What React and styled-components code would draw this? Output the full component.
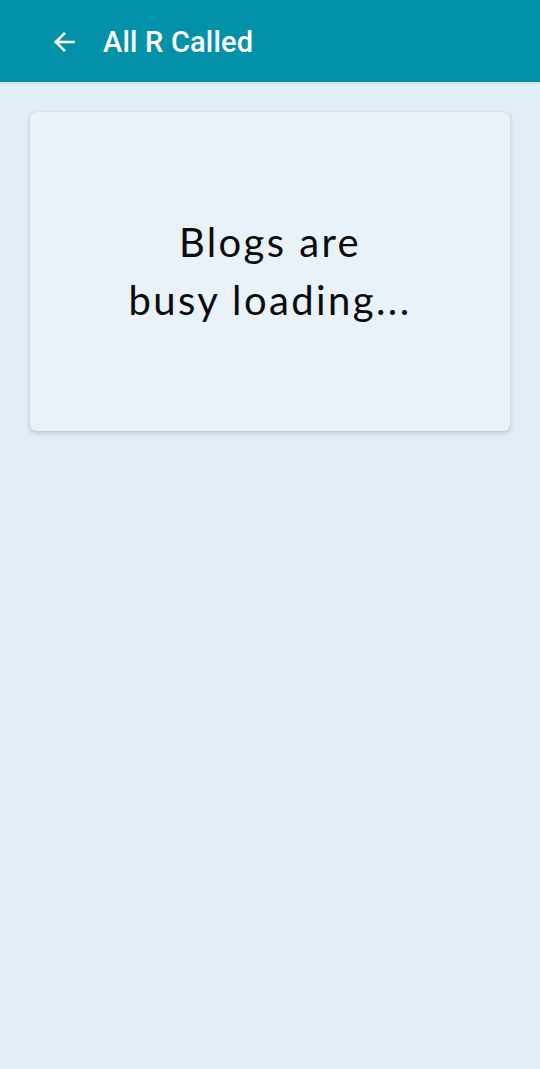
import React from 'react';
import styled, { createGlobalStyle } from 'styled-components';

const GlobalStyle = createGlobalStyle`
  html, body {
    margin: 0;
    padding: 0;
    background: #e0eef6;
  }
  #root {
    min-height: 100vh;
  }
`;

const Screen = styled.div`
  min-height: 100vh;
  background: #e0eef6;
  font-family: Roboto, "Liberation Sans", sans-serif;
`;

const AppBar = styled.header`
  height: 82px;
  background: #0391a9;
  display: flex;
  align-items: center;
  padding-left: 49px;
  gap: 25px;
  box-shadow: 0 1px 3px rgba(0, 0, 0, 0.12);
`;

const BackButton = styled.button`
  border: 0;
  background: none;
  padding: 0;
  width: 29px;
  height: 29px;
  display: flex;
  align-items: center;
  justify-content: center;
  color: #fff;
  cursor: pointer;
  margin-top: 2px;
`;

const Title = styled.h1`
  margin: 2px 0 0;
  color: #fff;
  font-size: 29px;
  font-weight: 500;
  letter-spacing: 0.2px;
`;

const Content = styled.main`
  padding: 30px 30px;
`;

const Card = styled.section`
  height: 319px;
  background: #e9f1f9;
  border-radius: 6px;
  box-shadow: 0 2px 4px rgba(60, 90, 110, 0.25), 0 0 1px rgba(60, 90, 110, 0.2);
  display: flex;
  align-items: center;
  justify-content: center;
`;

const Message = styled.p`
  margin: 0 0 2px;
  text-align: center;
  font-family: Lato, "Open Sans", sans-serif;
  font-size: 40px;
  line-height: 58px;
  letter-spacing: 2.4px;
  color: #0c0c0c;
`;

const ArrowIcon = () => (
  <svg width="28" height="28" viewBox="0 0 24 24" fill="none" stroke="currentColor" strokeWidth="2.2" strokeLinecap="square">
    <path d="M20 12H5" />
    <path d="M12 5l-7 7 7 7" />
  </svg>
);

const App = () => (
  <Screen>
    <GlobalStyle />
    <AppBar>
      <BackButton aria-label="Back">
        <ArrowIcon />
      </BackButton>
      <Title>All R Called</Title>
    </AppBar>
    <Content>
      <Card>
        <Message>
          Blogs are
          <br />
          busy loading...
        </Message>
      </Card>
    </Content>
  </Screen>
);

export default App;
